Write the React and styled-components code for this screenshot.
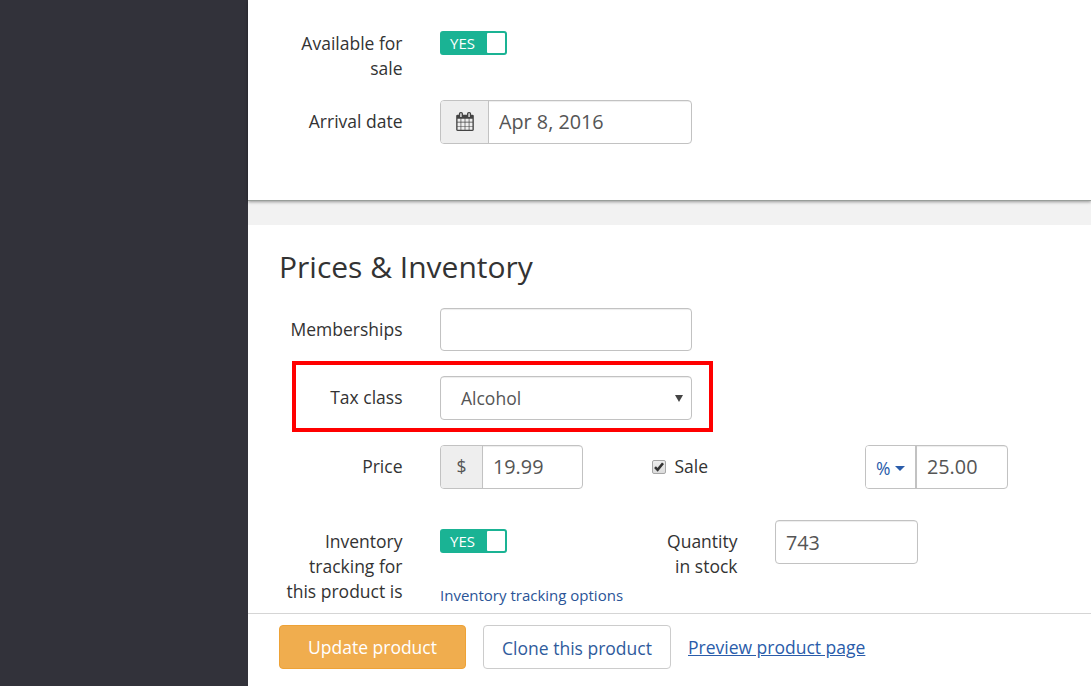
import React from "react";
import styled, { createGlobalStyle } from "styled-components";

const GlobalStyle = createGlobalStyle`
  *, *::before, *::after { box-sizing: border-box; }
  body {
    margin: 0;
    overflow: hidden;
    background: #fff;
    color: #333;
    font: 400 17.5px/25px "Open Sans", "Liberation Sans", sans-serif;
  }
  input, button { font-family: inherit; }
`;

const Page = styled.div`
  display: flex;
  width: 100%;
  height: 100vh;
`;

const Sidebar = styled.aside`
  flex: 0 0 248px;
  background: #32323a;
`;

const Main = styled.main`
  flex: 1;
  min-width: 0;
  display: flex;
  flex-direction: column;
  background: #f2f2f2;
`;

const Panel = styled.section`
  flex: ${(p) => (p.$height ? `0 0 ${p.$height}px` : "1 1 0")};
  min-height: 0;
  padding: ${(p) => p.$top}px 31px 0;
  background: #fff;
  margin-bottom: ${(p) => (p.$raised ? 24 : 0)}px;
  border-bottom: ${(p) => (p.$raised ? "1px solid #999e9a" : "0")};
  box-shadow: ${(p) => (p.$raised ? "0 1px 3px rgba(0, 0, 0, 0.38)" : "none")};
`;

const Title = styled.h2`
  margin: 0 0 24px;
  font-size: 30px;
  line-height: 34px;
  font-weight: 400;
`;

const Row = styled.div`
  position: relative;
  display: flex;
  align-items: flex-start;
  height: ${(p) => p.$height || 44}px;
  margin-bottom: ${(p) => p.$gap || 0}px;
`;

const Label = styled.label`
  flex: 0 0 ${(p) => p.$width || 123.5}px;
  margin-right: 37.5px;
  padding-top: ${(p) => (p.$flush ? 0 : 9)}px;
  text-align: right;
`;

const Group = styled.div`
  display: flex;
  width: ${(p) => p.$width}px;
  height: ${(p) => p.$height || 44}px;
  border: 1px solid #c2c2c2;
  border-radius: 4px;
  overflow: hidden;
  background: #fff;
`;

const Addon = styled.span`
  flex: 0 0 ${(p) => p.$width}px;
  display: flex;
  align-items: center;
  justify-content: center;
  padding-bottom: 1px;
  border-right: 1px solid #c2c2c2;
  background: #eee;
  color: #555;
`;

const UnitButton = styled.button`
  flex: 0 0 51px;
  display: flex;
  align-items: center;
  gap: 5px;
  padding: 2px 0 0 10px;
  border: 0;
  border-right: 2px solid #c2c2c2;
  background: #fff;
  color: #2a5caa;
  font-size: 17.5px;
`;

const Field = styled.input`
  flex: 1;
  min-width: 0;
  padding: 0 10px ${(p) => (p.$low ? 0 : 2)}px;
  border: 0;
  outline: 0;
  background: transparent;
  box-shadow: inset 0 1px 1px rgba(0, 0, 0, 0.075);
  color: #555;
  font-size: 19.8px;
`;

const SelectBox = styled.div`
  flex: 1;
  display: flex;
  align-items: center;
  justify-content: space-between;
  padding: 1px 8px 0 20px;
  box-shadow: inset 0 1px 1px rgba(0, 0, 0, 0.075);
  color: #555;
  font-size: 17.5px;
`;

const Caret = styled.span`
  width: 0;
  height: 0;
  border: solid transparent;
  border-width: ${(p) => p.$h}px ${(p) => p.$w}px 0;
  border-top-color: ${(p) => p.$color};
`;

const Highlight = styled.div`
  position: absolute;
  left: 13px;
  top: -15px;
  width: 421px;
  height: 71px;
  border: 4px solid #f00;
  pointer-events: none;
`;

const Switch = styled.div`
  display: flex;
  width: 67px;
  height: 24px;
  padding: 2px;
  border-radius: 3px;
  background: #1ab394;
`;

const SwitchText = styled.span`
  flex: 1;
  padding-left: 8px;
  color: #fff;
  font-size: 15px;
  line-height: 20px;
`;

const Knob = styled.span`
  width: 18px;
  height: 20px;
  border-radius: 1px;
  background: #fff;
`;

const SwitchSlot = styled.div`
  padding-top: 9px;
`;

const CheckLabel = styled.label`
  display: flex;
  align-items: center;
  width: 213px;
  height: 25px;
  margin: 9px 0 0 69px;
  gap: 8.5px;
`;

const CheckBox = styled.span`
  display: flex;
  width: 14px;
  height: 14px;
  margin-top: 1px;
  border: 1px solid #a6a6a6;
  border-radius: 2px;
  background: linear-gradient(#eee, #dcdcdc);
`;

const Tracking = styled.div`
  display: flex;
  flex-direction: column;
  gap: 30px;
  width: 183px;
`;

const OptionsLink = styled.a`
  color: #2a5497;
  font-size: 15px;
  white-space: nowrap;
`;

const Quantity = styled.div`
  display: flex;
  margin-left: 39px;
`;

const Footer = styled.footer`
  flex: 0 0 73px;
  display: flex;
  align-items: flex-start;
  padding: 11px 31px 0;
  border-top: 1px solid #d5d5d5;
  background: #fff;
`;

const Button = styled.button`
  width: ${(p) => p.$width}px;
  height: 44px;
  margin-right: 17px;
  padding: ${(p) => (p.$primary ? 0 : 2)}px 0 0;
  border: 1px solid ${(p) => (p.$primary ? "#eea236" : "#ccc")};
  border-radius: 4px;
  background: ${(p) => (p.$primary ? "#f0ad4e" : "#fff")};
  color: ${(p) => (p.$primary ? "#fff" : "#2f5b9c")};
  font-size: 17.5px;
`;

const PreviewLink = styled.a`
  padding-top: 10px;
  color: #2a5caa;
  font-size: 17.5px;
  text-decoration: underline;
  white-space: nowrap;
`;

const CalendarIcon = () => (
  <svg width="18" height="19" viewBox="0 0 1664 1792" fill="#444">
    <path d="M128 1664h288v-288h-288v288zm352 0h320v-288h-320v288zm-352-352h288v-320h-288v320zm352 0h320v-320h-320v320zm-352-384h288v-288h-288v288zm736 736h320v-288h-320v288zm-384-736h320v-288h-320v288zm768 736h288v-288h-288v288zm-384-352h320v-320h-320v320zm-352-864v-288q0-13-9.500-22.500t-22.500-9.500h-64q-13 0-22.500 9.500t-9.500 22.500v288q0 13 9.500 22.500t22.500 9.500h64q13 0 22.500-9.500t9.500-22.500zm736 864h288v-320h-288v320zm-384-384h320v-288h-320v288zm384 0h288v-288h-288v288zm32-480v-288q0-13-9.500-22.500t-22.500-9.500h-64q-13 0-22.500 9.500t-9.500 22.500v288q0 13 9.500 22.500t22.500 9.500h64q13 0 22.500-9.500t9.500-22.500zm384-64v1280q0 52-38 90t-90 38h-1408q-52 0-90-38t-38-90v-1280q0-52 38-90t90-38h128v-96q0-66 47-113t113-47h64q66 0 113 47t47 113v96h384v-96q0-66 47-113t113-47h64q66 0 113 47t47 113v96h128q52 0 90 38t38 90z" />
  </svg>
);

const CheckMark = () => (
  <svg width="12" height="12" viewBox="0 0 12 12" fill="none" stroke="#333" strokeWidth="2.6">
    <path d="M2 6.200 4.600 8.800 10 2.200" />
  </svg>
);

const YesSwitch = () => (
  <Switch>
    <SwitchText>YES</SwitchText>
    <Knob />
  </Switch>
);

export default function App() {
  return (
    <Page>
      <GlobalStyle />
      <Sidebar />
      <Main>
        <Panel $height={201} $top={31} $raised>
          <Row $height={50} $gap={19}>
            <Label $flush>Available for sale</Label>
            <YesSwitch />
          </Row>
          <Row>
            <Label>Arrival date</Label>
            <Group $width={252}>
              <Addon $width={48}>
                <CalendarIcon />
              </Addon>
              <Field defaultValue="Apr 8, 2016" />
            </Group>
          </Row>
        </Panel>
        <Panel $top={25}>
          <Title>Prices &amp; Inventory</Title>
          <Row $height={43} $gap={25}>
            <Label>Memberships</Label>
            <Group $width={252} $height={43}>
              <Field />
            </Group>
          </Row>
          <Row $gap={25}>
            <Label>Tax class</Label>
            <Group $width={252}>
              <SelectBox>
                Alcohol
                <Caret $w={4} $h={7} $color="#444" />
              </SelectBox>
            </Group>
            <Highlight />
          </Row>
          <Row $gap={31}>
            <Label>Price</Label>
            <Group $width={143}>
              <Addon $width={42}>$</Addon>
              <Field defaultValue="19.99" />
            </Group>
            <CheckLabel>
              <CheckBox>
                <CheckMark />
              </CheckBox>
              Sale
            </CheckLabel>
            <Group $width={143}>
              <UnitButton>
                %
                <Caret $w={5} $h={5} $color="#2a5caa" />
              </UnitButton>
              <Field defaultValue="25.00" />
            </Group>
          </Row>
          <Row $height={84}>
            <Label>Inventory tracking for this product is</Label>
            <Tracking>
              <SwitchSlot>
                <YesSwitch />
              </SwitchSlot>
              <OptionsLink>Inventory tracking options</OptionsLink>
            </Tracking>
            <Quantity>
              <Label $width={75.5}>Quantity in stock</Label>
              <Group $width={143}>
                <Field $low defaultValue="743" />
              </Group>
            </Quantity>
          </Row>
        </Panel>
        <Footer>
          <Button $width={187} $primary>Update product</Button>
          <Button $width={188}>Clone this product</Button>
          <PreviewLink>Preview product page</PreviewLink>
        </Footer>
      </Main>
    </Page>
  );
}
